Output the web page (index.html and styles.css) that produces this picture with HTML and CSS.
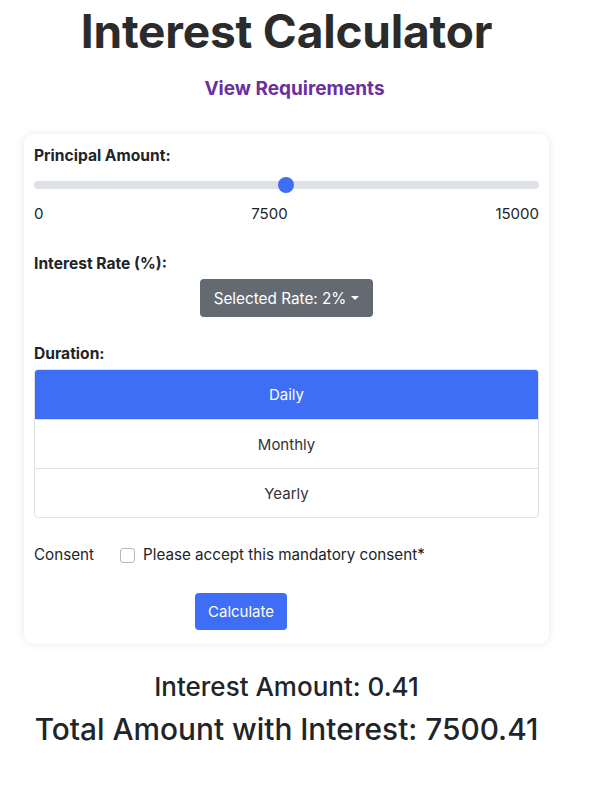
FILE: index.html
```html
<!DOCTYPE html>
<html lang="en">
<head>
<meta charset="utf-8">
<title>Interest Calculator</title>
<link rel="stylesheet" href="styles.css">
</head>
<body>
<div class="page">
  <h1 class="title">Interest Calculator</h1>
</div>
<a class="req-link" href="#">View Requirements</a>
<div class="page">
  <div class="card">
    <div class="field field-principal">
      <div class="label">Principal Amount:</div>
      <div class="slider">
        <div class="track"></div>
        <div class="thumb"></div>
      </div>
      <div class="scale"><span>0</span><span>7500</span><span>15000</span></div>
    </div>
    <div class="field field-rate">
      <div class="label">Interest Rate (%):</div>
      <div class="center">
        <button class="btn-gray">Selected Rate: 2%<span class="caret"></span></button>
      </div>
    </div>
    <div class="field">
      <div class="label label-dur">Duration:</div>
      <div class="list">
        <div class="item active">Daily</div>
        <div class="item">Monthly</div>
        <div class="item">Yearly</div>
      </div>
    </div>
    <div class="consent">
      <span class="consent-label">Consent</span>
      <span class="check"></span>
      <span class="consent-text">Please accept this mandatory consent*</span>
    </div>
    <div class="calc-row">
      <button class="btn-blue">Calculate</button>
    </div>
  </div>
  <div class="result result-sm">Interest Amount: 0.41</div>
  <div class="result result-lg">Total Amount with Interest: 7500.41</div>
</div>
</body>
</html>
```
FILE: styles.css
```css
* { box-sizing: border-box; }
body {
  margin: 0;
  background: #fff;
  font-family: Inter, "Liberation Sans", sans-serif;
  color: #212529;
}
.page {
  width: 525px;
  margin-left: 24px;
  display: flex;
  flex-direction: column;
  align-items: stretch;
}
.title {
  margin: 0;
  font-size: 46px;
  font-weight: 700;
  line-height: 62px;
  text-align: center;
  color: #2b2b2b;
  letter-spacing: -0.2px;
}
.req-link {
  display: block;
  text-align: center;
  margin-top: 13px;
  font-size: 19px;
  font-weight: 700;
  line-height: 28px;
  color: #6b2fa0;
  text-decoration: none;
}
.card {
  margin-top: 31px;
  background: #fff;
  border-radius: 10px;
  box-shadow: 0 0 10px rgba(0,0,0,0.09);
  padding: 12px 10px 14px;
}
.field-principal { margin-bottom: 29px; }
.field-rate { margin-bottom: 27px; }
.label {
  font-size: 15.6px;
  font-weight: 700;
  line-height: 20px;
}
.slider {
  position: relative;
  height: 18px;
  margin-top: 10px;
}
.track {
  position: absolute;
  left: 0; right: 0; top: 5px;
  height: 8px;
  border-radius: 4px;
  background: #dee2e6;
}
.thumb {
  position: absolute;
  left: 244px;
  top: 1px;
  width: 16px; height: 16px;
  border-radius: 50%;
  background: #3d6ef5;
}
.scale {
  display: flex;
  justify-content: space-between;
  font-size: 15px;
  line-height: 22px;
  margin-top: 9px;
}
.center { display: flex; justify-content: center; }
.btn-gray {
  margin-top: 5px;
  height: 38px;
  padding: 0 14px;
  border: none;
  border-radius: 4px;
  background: #636a72;
  color: #fff;
  font-family: inherit;
  font-size: 15.3px;
  display: flex;
  align-items: center;
}
.caret {
  display: inline-block;
  margin-left: 5px;
  border-top: 4px solid #fff;
  border-left: 4px solid transparent;
  border-right: 4px solid transparent;
}
.label-dur { margin-bottom: 5px; }
.list {
  border: 1px solid #dee2e6;
  border-radius: 4px;
  overflow: hidden;
}
.item {
  height: 49px;
  display: flex;
  align-items: center;
  justify-content: center;
  font-size: 15px;
  border-top: 1px solid #dee2e6;
  color: #333;
}
.item:first-child { border-top: none; }
.item.active { background: #3d6ef5; color: #fff; }
.consent {
  display: flex;
  align-items: center;
  font-size: 15.2px;
  line-height: 22px;
  margin-top: 26px;
}
.consent-label { width: 86px; }
.check {
  width: 15px; height: 15px;
  border: 1px solid #b5b9bd;
  border-radius: 3px;
  margin-right: 8px;
}
.calc-row {
  margin-top: 27px;
  padding-left: 161px;
  display: flex;
}
.btn-blue {
  height: 37px;
  padding: 0 13px;
  border: none;
  border-radius: 4px;
  background: #3d6ef5;
  color: #fff;
  font-family: inherit;
  font-size: 15px;
}
.result {
  text-align: center;
  color: #212529;
  font-weight: 500;
}
.result-sm { margin-top: 27px; font-size: 26px; line-height: 32px; }
.result-lg { margin-top: 8px; font-size: 29.8px; line-height: 36px; }
```
